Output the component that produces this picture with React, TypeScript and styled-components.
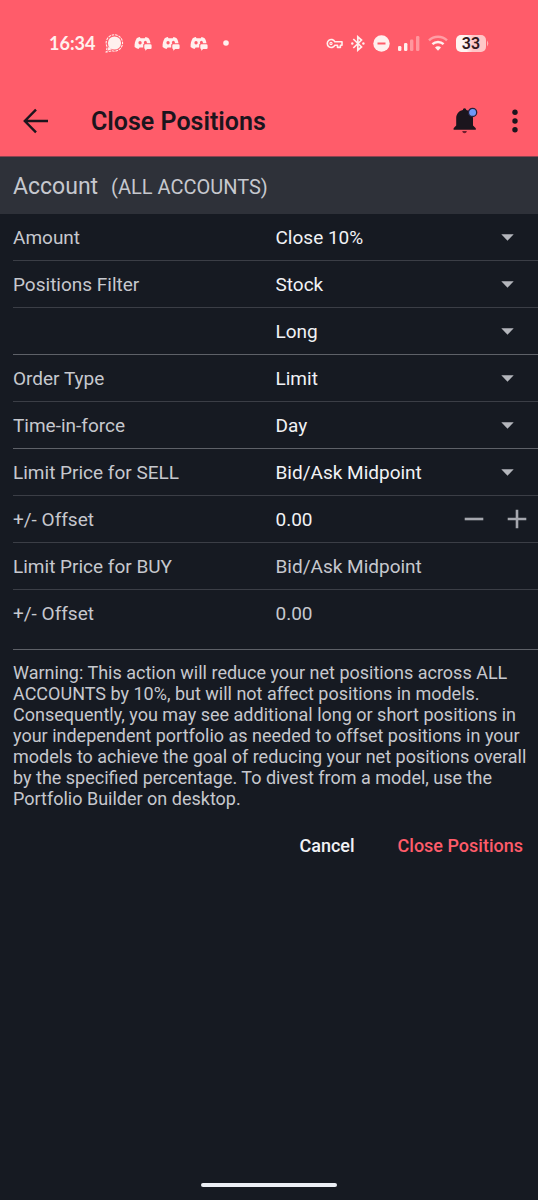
import React, { useState } from "react";
import styled, { createGlobalStyle } from "styled-components";

const color = {
  accent: "#ff5c6a",
  page: "#161a22",
  band: "#2e3139",
  ink: "#1b151d",
  label: "#c6c8ce",
  text: "#f1f2f5",
  line: "#3b3e46",
  strongLine: "#5e6168",
  control: "#b4b6bc",
};

const GlobalStyle = createGlobalStyle`
  *, *::before, *::after { box-sizing: border-box; }
  body { margin: 0; background: ${color.page}; }
  button, input, select { font: inherit; color: inherit; margin: 0; padding: 0; border: 0; background: none; }
  button { cursor: pointer; }
  svg { display: block; flex: none; }
`;

const Screen = styled.div`
  min-height: 100vh;
  display: flex;
  flex-direction: column;
  background: ${color.page};
  color: ${color.label};
  font-family: Roboto, "Liberation Sans", sans-serif;
  font-size: 19px;
`;

const Top = styled.header`
  background: ${color.accent};
  border-bottom: 1px solid #8d4350;
`;

const StatusBar = styled.div`
  display: flex;
  justify-content: space-between;
  align-items: center;
  height: 86px;
  padding: 0 49px;
  color: #fff0ee;
`;

const StatusGroup = styled.div<{ $gap: number }>`
  display: flex;
  align-items: center;
  gap: ${(p) => p.$gap}px;
`;

const Clock = styled.time`
  font-family: Lato, "Liberation Sans", sans-serif;
  font-size: 18px;
  font-weight: 700;
`;

const AppBar = styled.div`
  display: flex;
  align-items: center;
  height: 70px;
  padding: 0 7px 0 20px;
  color: ${color.ink};
`;

const Title = styled.h1`
  flex: 1;
  margin: 0 0 0 39px;
  padding-top: 2px;
  font-size: 25px;
  font-weight: 600;
  line-height: 30px;
`;

const IconButton = styled.button<{ $width: number }>`
  display: flex;
  align-items: center;
  justify-content: center;
  width: ${(p) => p.$width}px;
  height: 40px;
`;

const AccountBand = styled.div`
  display: flex;
  align-items: center;
  gap: 13px;
  height: 57px;
  padding: 2px 13px 0;
  background: ${color.band};
  font-size: 23px;
`;

const AccountName = styled.span`
  font-size: 20px;
`;

const Form = styled.form`
  flex: 1;
`;

const Row = styled.div<{ $strong?: boolean; $last?: boolean }>`
  display: grid;
  grid-template-columns: minmax(0, 1fr) minmax(0, 1fr);
  align-items: center;
  margin-left: 13px;
  height: ${(p) => (p.$last ? 60 : 47)}px;
  padding-bottom: ${(p) => (p.$last ? 13 : 0)}px;
  border-bottom: 1px solid ${(p) => (p.$strong ? color.strongLine : color.line)};
`;

const Label = styled.label`
  padding-top: 2px;
  line-height: 24px;
`;

const Picker = styled.div`
  display: grid;
  align-items: center;
  & > * { grid-area: 1 / 1; }
  & > svg { justify-self: end; margin-right: 24px; pointer-events: none; }
`;

const Select = styled.select`
  appearance: none;
  width: 100%;
  height: 40px;
  color: ${color.text};
  outline: none;
  &:disabled { color: ${color.label}; opacity: 1; }
  option { background: ${color.band}; }
`;

const Stepper = styled.div`
  display: flex;
  align-items: center;
`;

const NumberBox = styled.input`
  flex: 1;
  min-width: 0;
  height: 40px;
  color: ${color.text};
  outline: none;
  &:disabled { color: ${color.label}; }
`;

const Warning = styled.p`
  margin: 0;
  padding: 12px 10px 0 13px;
  font-size: 18px;
  line-height: 21px;
`;

const Actions = styled.div`
  display: flex;
  justify-content: flex-end;
  gap: 43px;
  padding: 16px 15px;
`;

const TextButton = styled.button<{ $accent?: boolean }>`
  height: 40px;
  font-size: 18px;
  font-weight: 500;
  color: ${(p) => (p.$accent ? color.accent : color.text)};
`;

const HomeBar = styled.div`
  width: 136px;
  height: 4px;
  margin: 0 auto 13px;
  border-radius: 2px;
  background: #eceff5;
`;

const ChatIcon = () => (
  <svg width="19" height="19" viewBox="0 0 19 19" fill="none">
    <circle cx="9.5" cy="9" r="6.6" fill="currentColor" />
    <path d="M3.6 12.6 L2.4 16.8 L7 15.3Z" fill="currentColor" />
    <path d="M6.3 17 L1.2 18 L2.2 13 A8.2 8.2 0 1 1 6.3 16.6" stroke="currentColor" strokeWidth="1.1" strokeDasharray="2.6 .9" />
  </svg>
);

const GamepadIcon = () => (
  <svg width="18" height="15" viewBox="0 0 18 15">
    <path
      fill="currentColor"
      fillRule="evenodd"
      d="M5.8 1 C4.6 1.2 3.4 1.6 2.7 2.2 C1.2 4.6.4 7.7.6 11 C1.8 12 3.2 12.7 4.5 13 L5.6 11.4 L9.2 11.6 L9.2 8.4 L10.2 7.4 A1.5 1.6 0 1 1 12.7 7.3 L16.5 7.3 C16.3 5.4 15.6 3.5 14.6 2.2 C13.6 1.6 12.6 1.2 11.5 1 L10.8 2.2 L6.5 2.2Z M6 5 A1.6 1.7 0 1 0 6.1 8.5 A1.6 1.7 0 1 0 6 5Z"
    />
    <path fill="currentColor" d="M11.4 8.3 H16.3 Q17.6 8.3 17.6 9.5 V12 Q17.6 13.1 16.4 13.1 H13.2 L11.2 14.8 V13 Q10.3 12.9 10.3 12 V9.5 Q10.3 8.3 11.4 8.3Z" />
  </svg>
);

const DotIcon = () => (
  <svg width="16" height="6" viewBox="0 0 16 6">
    <circle cx="8" cy="3" r="2.8" fill="currentColor" />
  </svg>
);

const KeyIcon = () => (
  <svg width="17" height="11" viewBox="0 0 17 11" fill="none" stroke="currentColor">
    <path strokeWidth="1.6" strokeLinejoin="round" d="M8.9 3.8 A4 4 0 1 0 8.9 7.2 H11.5 V9.4 H14.4 V7.2 H16 V3.8Z" />
    <circle cx="5" cy="5.5" r="1.1" strokeWidth="1.1" />
  </svg>
);

const BluetoothIcon = () => (
  <svg width="14" height="17" viewBox="0 0 14 17" fill="none" stroke="currentColor" strokeWidth="1.7">
    <path d="M2.3 4 L10.5 12 L6.8 15.2 V1.8 L10.5 5 L2.3 13" />
    <circle cx="1.3" cy="8.5" r="1.2" fill="currentColor" stroke="none" />
    <circle cx="12.4" cy="8.5" r="1.2" fill="currentColor" stroke="none" />
  </svg>
);

const DoNotDisturbIcon = () => (
  <svg width="17" height="17" viewBox="0 0 17 17">
    <circle cx="8.5" cy="8.5" r="8.2" fill="currentColor" />
    <path d="M4.5 8.5 H12.5" stroke={color.accent} strokeWidth="2" />
  </svg>
);

const SignalIcon = () => (
  <svg width="22" height="16" viewBox="0 0 22 16" fill="currentColor">
    <rect x="0" y="11" width="3.4" height="5" rx="1.3" />
    <rect x="6" y="8" width="3.4" height="8" rx="1.3" />
    <rect x="12" y="4.5" width="3.4" height="11.5" rx="1.3" opacity=".4" />
    <rect x="18" y="1" width="3.4" height="15" rx="1.3" opacity=".4" />
  </svg>
);

const WifiIcon = () => (
  <svg width="20" height="16" viewBox="0 0 20 16" fill="none" stroke="currentColor" strokeWidth="2.4">
    <path d="M1 5.4 A13 13 0 0 1 19 5.4" opacity=".45" />
    <path d="M4.4 9.2 A8.2 8.2 0 0 1 15.6 9.2" />
    <path d="M10 15.8 L7 12.4 A4.2 4.2 0 0 1 13 12.4Z" fill="currentColor" stroke="none" />
  </svg>
);

const BatteryIcon = () => (
  <svg width="33" height="17" viewBox="0 0 33 17">
    <defs>
      <linearGradient id="charge">
        <stop offset=".35" stopColor="#fff3f0" />
        <stop offset=".55" stopColor="#ffc6c7" />
      </linearGradient>
    </defs>
    <rect x="0" y="0" width="30" height="17" rx="5" fill="url(#charge)" />
    <path d="M31.2 5.5 Q33.2 8.5 31.2 11.5Z" fill="#ffc6c7" />
    <text x="15" y="14.2" textAnchor="middle" fontFamily="Roboto, sans-serif" fontSize="16" fontWeight="600" fill="#30181d">
      33
    </text>
  </svg>
);

const BackIcon = () => (
  <svg width="26" height="26" viewBox="0 0 26 26" fill="none" stroke="currentColor" strokeWidth="2.4">
    <path d="M25 13 H2 M13 1.6 L1.8 13 L13 24.4" />
  </svg>
);

const BellIcon = () => (
  <svg width="26" height="28" viewBox="0 0 26 28" fill="currentColor">
    <path d="M11.5 1.2 C12.6 1.2 13.3 2 13.3 3.1 C17.7 4 20 7.3 20 11.5 V18.5 L22.8 21.3 V22.8 H.6 V21.3 L3.2 18.5 V11.5 C3.2 7.3 5.5 4 9.9 3.1 C9.9 2 10.4 1.2 11.5 1.2Z" />
    <path d="M9.2 24 H13.9 Q13.5 26.3 11.5 26.3 Q9.6 26.3 9.2 24Z" fill="#6d1f2e" />
    <circle cx="19.6" cy="5.4" r="4.1" fill="#6f97f5" stroke="#28213b" strokeWidth="1.3" />
  </svg>
);

const MoreIcon = () => (
  <svg width="6" height="24" viewBox="0 0 6 24" fill="currentColor">
    <circle cx="3" cy="3.2" r="2.7" />
    <circle cx="3" cy="12" r="2.7" />
    <circle cx="3" cy="20.8" r="2.7" />
  </svg>
);

const CaretIcon = () => (
  <svg width="13" height="7" viewBox="0 0 13 7" fill={color.control}>
    <path d="M.3 .3 H12.7 L6.5 6.7Z" />
  </svg>
);

const StepIcon = ({ plus }: { plus?: boolean }) => (
  <svg width="20" height="20" viewBox="0 0 20 20" stroke="#a5a7ae" strokeWidth="2.6">
    <path d={plus ? "M.7 10 H19.3 M10 .7 V19.3" : "M.7 10 H19.3"} />
  </svg>
);

type SelectRowProps = { id: string; label?: string; name?: string; options: string[]; strong?: boolean; disabled?: boolean };

const SelectRow = ({ id, label, name, options, strong, disabled }: SelectRowProps) => (
  <Row $strong={strong}>
    <Label htmlFor={id}>{label}</Label>
    <Picker>
      <Select id={id} aria-label={name} disabled={disabled}>
        {options.map((o) => (
          <option key={o}>{o}</option>
        ))}
      </Select>
      {!disabled && <CaretIcon />}
    </Picker>
  </Row>
);

const prices = ["Bid/Ask Midpoint", "Bid", "Ask"];

export default function App() {
  const [offset, setOffset] = useState("0.00");
  const step = (by: number) => setOffset(((Number(offset) || 0) + by).toFixed(2));

  return (
    <Screen>
      <GlobalStyle />
      <Top>
        <StatusBar>
          <StatusGroup $gap={10}>
            <Clock>16:34</Clock>
            <ChatIcon />
            <GamepadIcon />
            <GamepadIcon />
            <GamepadIcon />
            <DotIcon />
          </StatusGroup>
          <StatusGroup $gap={8}>
            <KeyIcon />
            <BluetoothIcon />
            <DoNotDisturbIcon />
            <SignalIcon />
            <WifiIcon />
            <BatteryIcon />
          </StatusGroup>
        </StatusBar>
        <AppBar>
          <IconButton $width={32} aria-label="Back">
            <BackIcon />
          </IconButton>
          <Title>Close Positions</Title>
          <IconButton $width={66} aria-label="Notifications">
            <BellIcon />
          </IconButton>
          <IconButton $width={32} aria-label="More options">
            <MoreIcon />
          </IconButton>
        </AppBar>
      </Top>

      <AccountBand>
        <span>Account</span>
        <AccountName>(ALL ACCOUNTS)</AccountName>
      </AccountBand>

      <Form onSubmit={(e) => e.preventDefault()}>
        <SelectRow id="amount" label="Amount" options={["Close 10%", "Close 50%", "Close 100%"]} />
        <SelectRow id="kind" label="Positions Filter" options={["Stock", "Option", "Future"]} />
        <SelectRow id="side" name="Position side" options={["Long", "Short"]} strong />
        <SelectRow id="order" label="Order Type" options={["Limit", "Market"]} />
        <SelectRow id="tif" label="Time-in-force" options={["Day", "GTC"]} strong />
        <SelectRow id="sell" label="Limit Price for SELL" options={prices} />
        <Row>
          <Label htmlFor="sell-offset">+/- Offset</Label>
          <Stepper>
            <NumberBox id="sell-offset" inputMode="decimal" value={offset} onChange={(e) => setOffset(e.target.value)} />
            <IconButton type="button" $width={43} aria-label="Decrease offset" onClick={() => step(-0.01)}>
              <StepIcon />
            </IconButton>
            <IconButton type="button" $width={43} aria-label="Increase offset" onClick={() => step(0.01)}>
              <StepIcon plus />
            </IconButton>
          </Stepper>
        </Row>
        <SelectRow id="buy" label="Limit Price for BUY" options={prices} disabled />
        <Row $last $strong>
          <Label htmlFor="buy-offset">+/- Offset</Label>
          <Stepper>
            <NumberBox id="buy-offset" value="0.00" disabled readOnly />
          </Stepper>
        </Row>

        <Warning>
          Warning: This action will reduce your net positions across ALL ACCOUNTS by 10%, but will not affect positions in
          models. Consequently, you may see additional long or short positions in your independent portfolio as needed to
          offset positions in your models to achieve the goal of reducing your net positions overall by the specified
          percentage. To divest from a model, use the Portfolio Builder on desktop.
        </Warning>

        <Actions>
          <TextButton type="button">Cancel</TextButton>
          <TextButton type="submit" $accent>
            Close Positions
          </TextButton>
        </Actions>
      </Form>
      <HomeBar />
    </Screen>
  );
}
